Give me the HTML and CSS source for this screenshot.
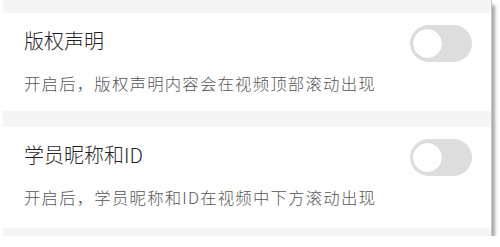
FILE: index.html
```html
<!DOCTYPE html>
<html lang="zh">
<head>
<meta charset="utf-8">
<link rel="stylesheet" href="styles.css">
</head>
<body>
<div class="frame">
  <div class="card card-first">
    <div class="text">
      <div class="title">版权声明</div>
      <div class="desc">开启后，版权声明内容会在视频顶部滚动出现</div>
    </div>
    <div class="toggle"><span class="knob"></span></div>
  </div>
  <div class="card card-second">
    <div class="text">
      <div class="title">学员昵称和ID</div>
      <div class="desc">开启后，学员昵称和ID在视频中下方滚动出现</div>
    </div>
    <div class="toggle"><span class="knob"></span></div>
  </div>
</div>
</body>
</html>
```
FILE: styles.css
```css
html, body {
  margin: 0;
  padding: 0;
  background: #ffffff;
}
body {
  font-family: "Noto Sans CJK SC", "Noto Sans", sans-serif;
  font-weight: 300;
}
.frame {
  margin-left: 3px;
  width: 488px;
  height: 223px;
  padding-top: 13px;
  background: #f5f5f5;
  border-right: 1px solid #c8c8c8;
  box-shadow: 3px 5px 3px rgba(0, 0, 0, 0.35);
  display: flex;
  flex-direction: column;
  gap: 16px;
}
.card {
  background: #ffffff;
  display: flex;
  justify-content: space-between;
  align-items: flex-start;
  padding: 14px 19px 0 21px;
  box-sizing: border-box;
}
.card-first { height: 98px; }
.card-second { height: 101px; }
.title {
  font-size: 20px;
  line-height: 28px;
  color: #1f1f1f;
}
.desc {
  margin-top: 16px;
  font-size: 16.4px;
  line-height: 24px;
  letter-spacing: 1.2px;
  color: #555555;
}
.toggle {
  margin-top: -2px;
  width: 62px;
  height: 37px;
  border-radius: 19px;
  background: #dddddd;
  display: flex;
  align-items: center;
  padding-left: 3px;
  box-sizing: border-box;
}
.knob {
  width: 29px;
  height: 29px;
  border-radius: 50%;
  background: #ffffff;
  box-shadow: 0 0 1px rgba(0, 0, 0, 0.15);
}
```
